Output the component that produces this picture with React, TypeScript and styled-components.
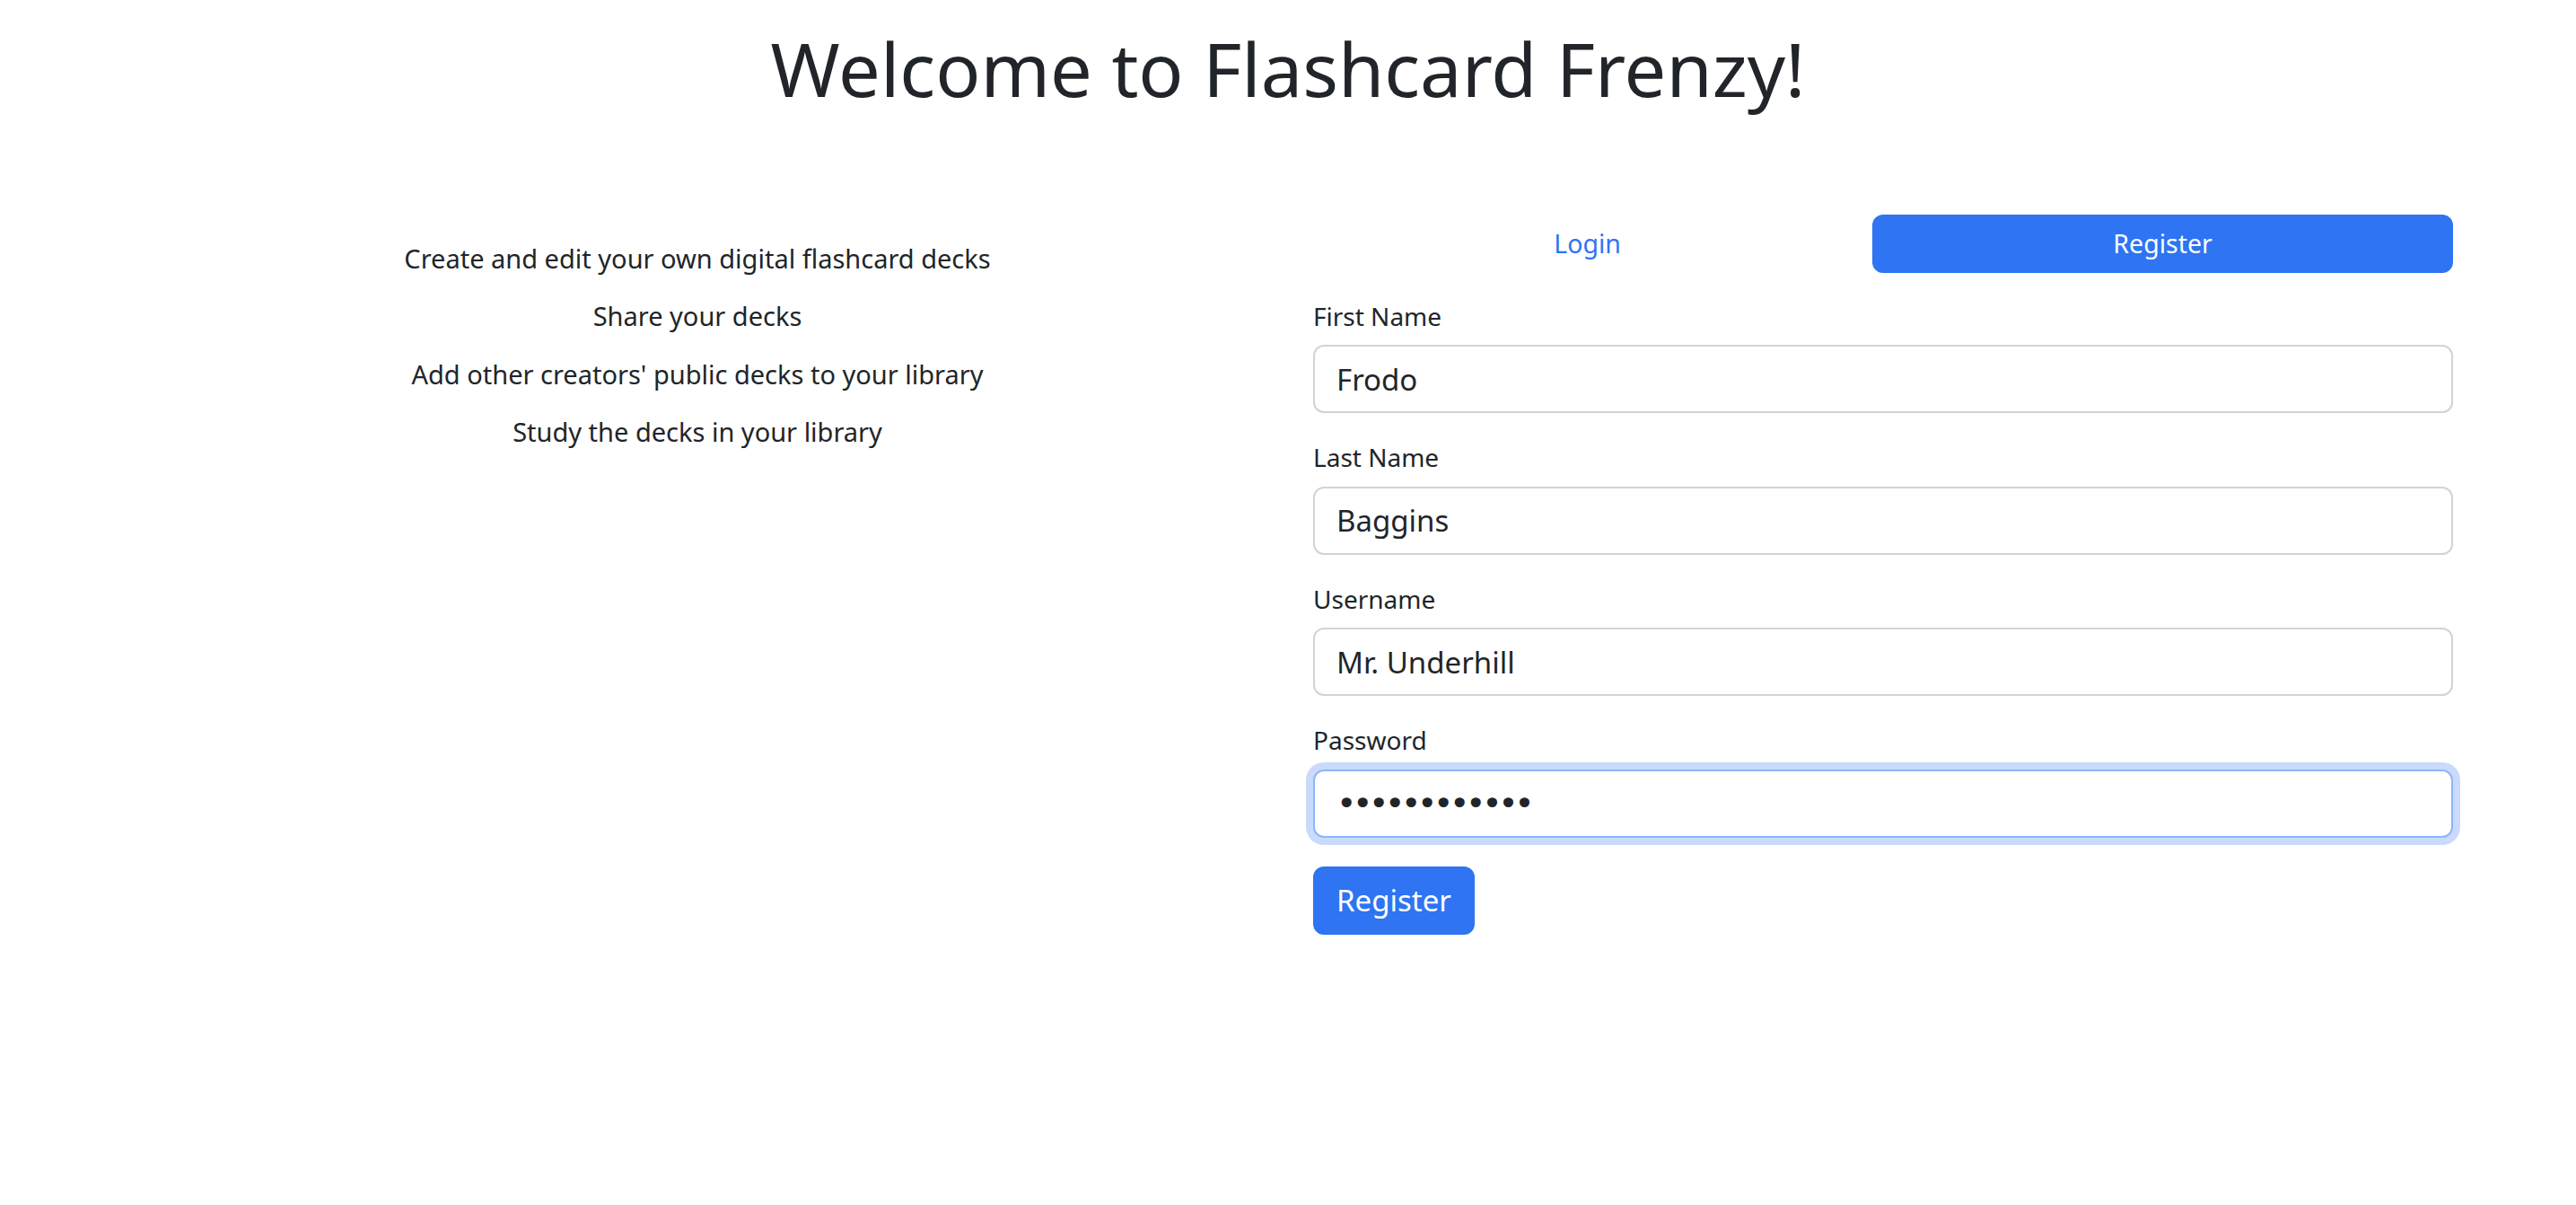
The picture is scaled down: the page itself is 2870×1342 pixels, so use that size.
import React, { FC, useEffect, useRef } from 'react'
import styled, { createGlobalStyle } from 'styled-components'

const GlobalStyle = createGlobalStyle`
	html, body {
		margin: 0;
		padding: 0;
		background: #ffffff;
	}
	body {
		font-family: 'Noto Sans', 'Liberation Sans', sans-serif;
		color: #212529;
	}
	* {
		box-sizing: border-box;
	}
`

const BLUE = '#2e74f3'

const Page = styled.div`
	padding-top: 26px;
	min-height: 1342px;
`

const Title = styled.h1`
	margin: 0 0 113px;
	font-size: 83px;
	font-weight: 400;
	line-height: 1.2;
	text-align: center;
	color: #212529;
`

const Container = styled.div`
	max-width: 2640px;
	margin: 0 auto;
	padding: 0 22px 0 27px;
`

const Row = styled.div`
	display: grid;
	grid-template-columns: 1fr 1fr;
	column-gap: 51px;
`

const FeatureList = styled.div`
	padding-top: 27px;
	text-align: center;
`

const Feature = styled.p`
	margin: 0 0 21px;
	font-size: 29px;
	line-height: 43.5px;
`

const FormCol = styled.div`
	display: flex;
	flex-direction: column;
`

const Tabs = styled.div`
	display: flex;
	gap: 12px;
	margin-bottom: 28px;
`

const Tab = styled.button<{ $active?: boolean }>`
	flex: 1 1 auto;
	padding: 12px 32px;
	border: none;
	border-radius: 12px;
	font-family: inherit;
	font-size: 28.5px;
	line-height: 41px;
	cursor: pointer;
	background: ${({ $active }) => ($active ? BLUE : 'transparent')};
	color: ${({ $active }) => ($active ? '#ffffff' : BLUE)};
`

const Field = styled.div`
	margin-bottom: 29px;
`

const Label = styled.label`
	display: block;
	margin-bottom: 12px;
	font-size: 28px;
	line-height: 40.5px;
	color: #212529;
`

const Input = styled.input<{ $focused?: boolean }>`
	display: block;
	width: 100%;
	height: 76px;
	padding: 12px 24px;
	border: 2px solid ${({ $focused }) => ($focused ? '#8db6f9' : '#ced4da')};
	border-radius: 12px;
	font-family: ${({ type }) => (type === 'password' ? "'DejaVu Sans', sans-serif" : 'inherit')};
	font-size: ${({ type }) => (type === 'password' ? '38px' : '33px')};
	line-height: 48px;
	letter-spacing: ${({ type }) => (type === 'password' ? '-4.4px' : 'normal')};
	color: #212529;
	background: #ffffff;
	outline: none;
	box-shadow: ${({ $focused }) => ($focused ? '0 0 0 8px #c9dafb' : 'none')};
	caret-color: #000000;
`

const SubmitButton = styled.button`
	align-self: flex-start;
	margin-top: 3px;
	padding: 12px 24px;
	border: 2px solid ${BLUE};
	border-radius: 12px;
	background: ${BLUE};
	color: #ffffff;
	font-family: inherit;
	font-size: 33px;
	line-height: 48px;
	cursor: pointer;
`

const features = [
	'Create and edit your own digital flashcard decks',
	'Share your decks',
	"Add other creators' public decks to your library",
	'Study the decks in your library',
]

const fields = [
	{ id: 'firstName', label: 'First Name', type: 'text', value: 'Frodo' },
	{ id: 'lastName', label: 'Last Name', type: 'text', value: 'Baggins' },
	{ id: 'username', label: 'Username', type: 'text', value: 'Mr. Underhill' },
	{ id: 'password', label: 'Password', type: 'password', value: 'myprecious!!' },
]

const RegisterForm: FC = () => {
	const passwordRef = useRef<HTMLInputElement>(null)

	useEffect(() => {
		const el = passwordRef.current
		if (el) {
			el.focus()
			el.setSelectionRange(el.value.length, el.value.length)
		}
	}, [])

	return (
		<FormCol>
			<Tabs>
				<Tab type="button">Login</Tab>
				<Tab type="button" $active>
					Register
				</Tab>
			</Tabs>
			<form onSubmit={(e) => e.preventDefault()}>
				{fields.map(({ id, label, type, value }) => (
					<Field key={id}>
						<Label htmlFor={id}>{label}</Label>
						<Input
							id={id}
							type={type}
							defaultValue={value}
							$focused={type === 'password'}
							ref={type === 'password' ? passwordRef : undefined}
						/>
					</Field>
				))}
				<SubmitButton type="submit">Register</SubmitButton>
			</form>
		</FormCol>
	)
}

const App: FC = () => (
	<Page>
		<GlobalStyle />
		<Title>Welcome to Flashcard Frenzy!</Title>
		<Container>
			<Row>
				<FeatureList>
					{features.map((text) => (
						<Feature key={text}>{text}</Feature>
					))}
				</FeatureList>
				<RegisterForm />
			</Row>
		</Container>
	</Page>
)

export default App
